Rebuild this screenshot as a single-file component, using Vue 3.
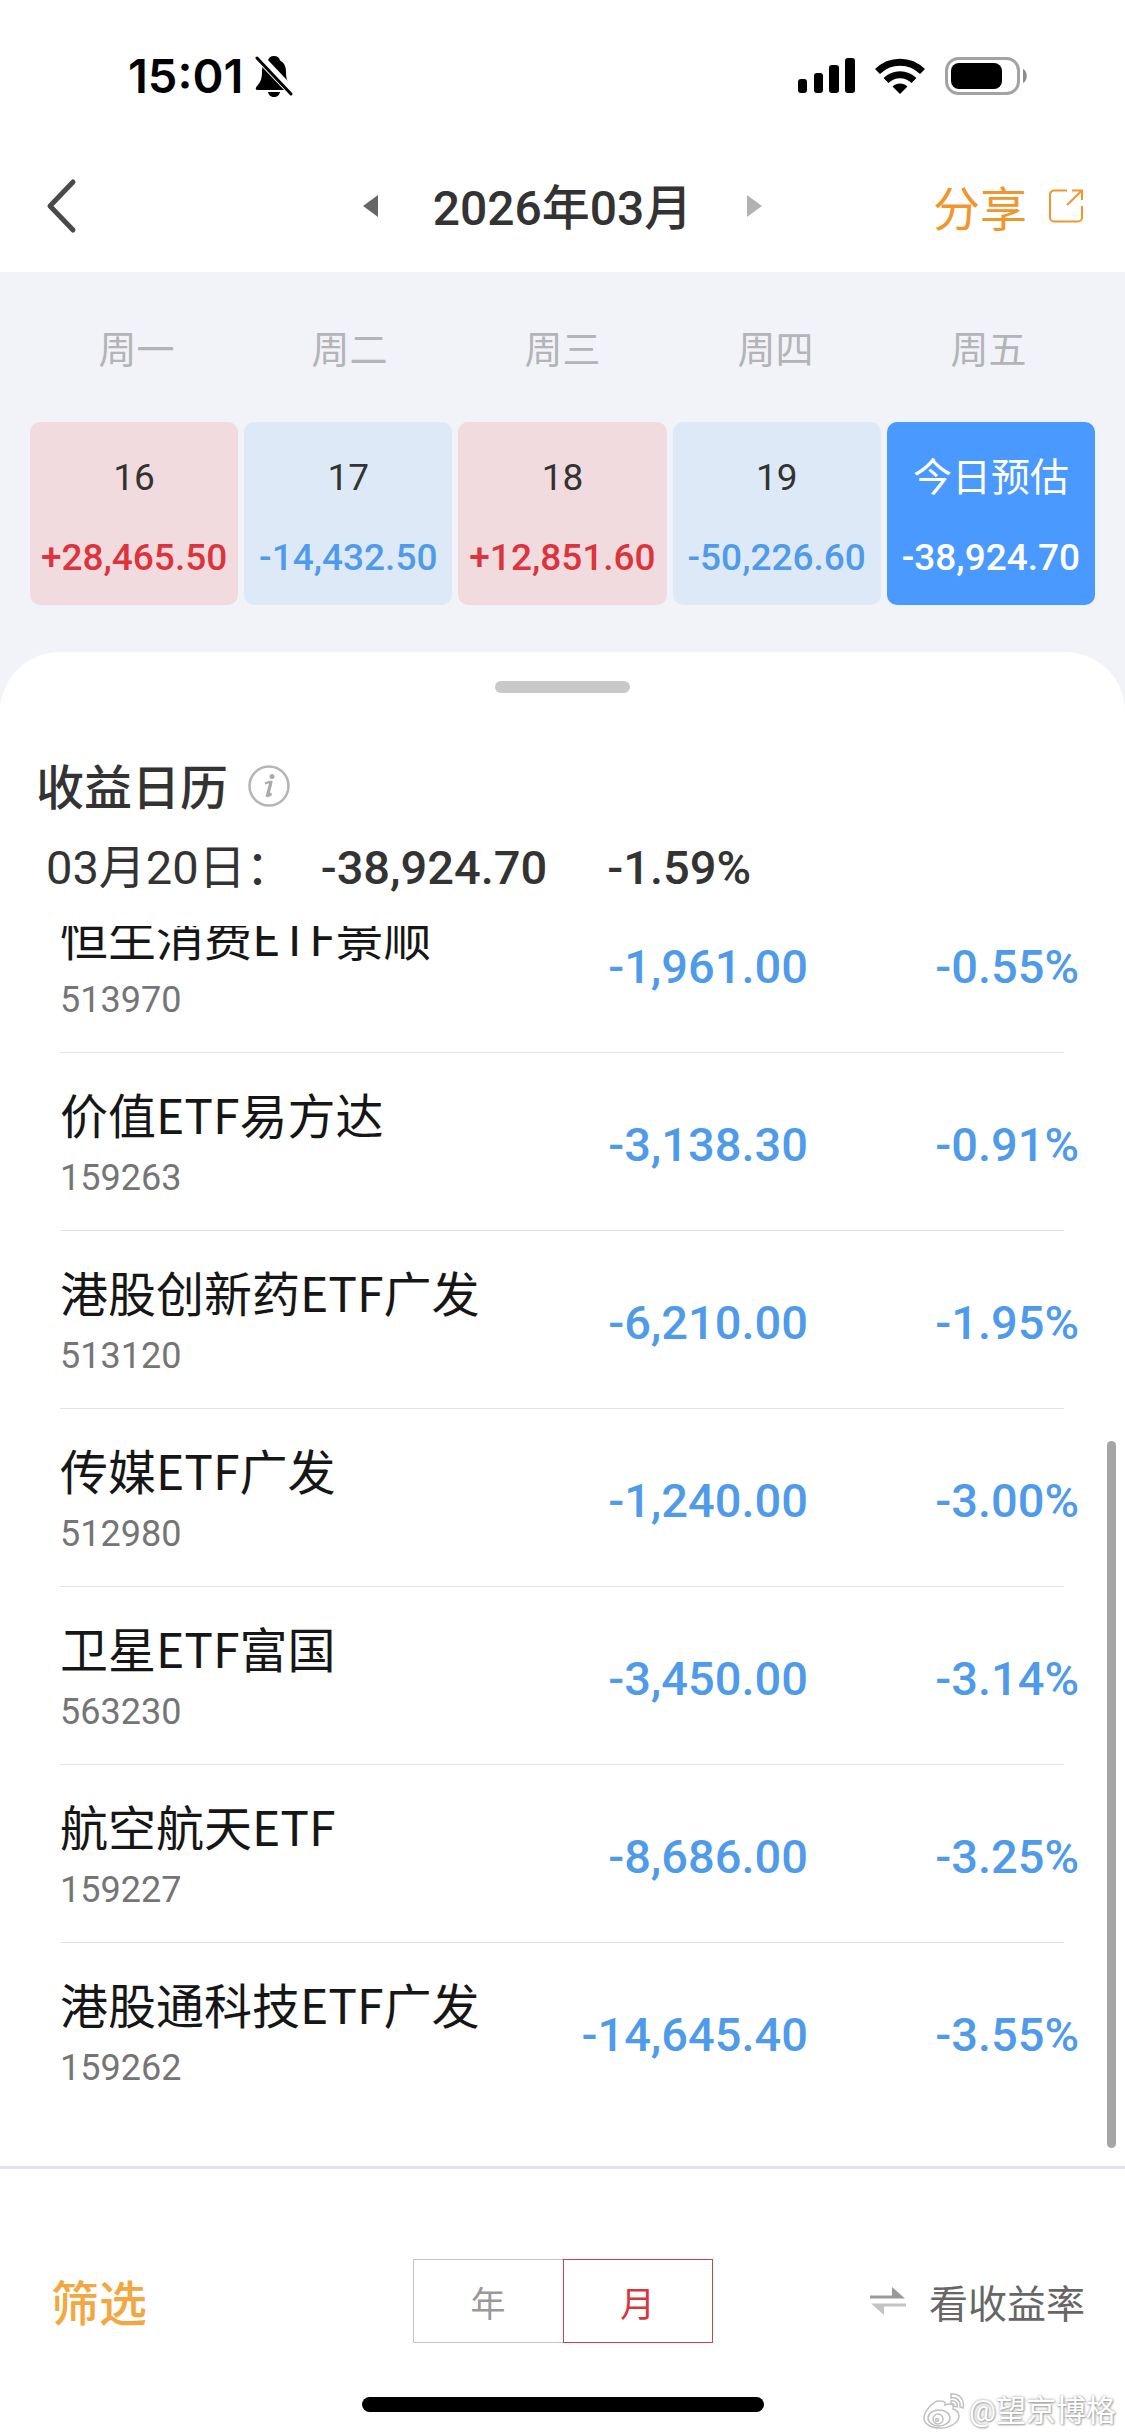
<script setup>
import { ref } from 'vue'

const weekdays = ['周一', '周二', '周三', '周四', '周五']
const days = [
  { label: '16', value: '+28,465.50', tone: 'gain' },
  { label: '17', value: '-14,432.50', tone: 'loss' },
  { label: '18', value: '+12,851.60', tone: 'gain' },
  { label: '19', value: '-50,226.60', tone: 'loss' },
  { label: '今日预估', value: '-38,924.70', tone: 'today' },
]
const holdings = [
  { name: '恒生消费ETF景顺', code: '513970', amount: '-1,961.00', rate: '-0.55%' },
  { name: '价值ETF易方达', code: '159263', amount: '-3,138.30', rate: '-0.91%' },
  { name: '港股创新药ETF广发', code: '513120', amount: '-6,210.00', rate: '-1.95%' },
  { name: '传媒ETF广发', code: '512980', amount: '-1,240.00', rate: '-3.00%' },
  { name: '卫星ETF富国', code: '563230', amount: '-3,450.00', rate: '-3.14%' },
  { name: '航空航天ETF', code: '159227', amount: '-8,686.00', rate: '-3.25%' },
  { name: '港股通科技ETF广发', code: '159262', amount: '-14,645.40', rate: '-3.55%' },
]
const periods = ['年', '月']
const period = ref('月')
</script>

<template>
  <div class="app">
    <header class="top">
      <div class="status">
        <div class="clock">
          <span>15:01</span>
          <svg width="38" height="42" viewBox="0 0 38 42" aria-hidden="true">
            <path d="M19 1c-3.400 0-5.600 2-6 4.600C8.500 8 7 12 7 17c0 8-2 10.500-5.300 14.500C0 34 .8 35 3 35h32c2.200 0 3-1 1.300-3.500C33 27.500 31 25 31 17c0-5-1.500-9-6-11.400C24.600 3 22.400 1 19 1z" />
            <path d="M13 37h12c-.5 3-3 5-6 5s-5.500-2-6-5z" />
            <path d="M3 1L38 38" stroke="#fff" stroke-width="9" />
            <path d="M2 3L36 39" stroke="#000" stroke-width="3" stroke-linecap="round" />
          </svg>
        </div>
        <div class="signals">
          <svg width="57" height="36" viewBox="0 0 57 36" aria-hidden="true">
            <rect x="0" y="21" width="9" height="14" rx="3" />
            <rect x="16" y="15" width="9" height="20" rx="3" />
            <rect x="31" y="7" width="10" height="28" rx="3" />
            <rect x="47" y="0" width="10" height="35" rx="3" />
          </svg>
          <svg width="50" height="37" viewBox="0 0 50 37" aria-hidden="true">
            <g fill="none" stroke="#000" stroke-width="7">
              <path d="M2.500 13.500C15 1 35 1 47.500 13.500" />
              <path d="M11 22.500C19 14.800 31 14.800 39 22.500" />
            </g>
            <path d="M25 36l-7.500-7.500C21.500 24.500 28.500 24.500 32.500 28.500z" />
          </svg>
          <svg width="83" height="38" viewBox="0 0 83 38" aria-hidden="true">
            <rect x="1.500" y="1.500" width="72" height="35" rx="12" fill="none" stroke="#a3a3a3" stroke-width="3" />
            <rect x="6" y="6" width="51" height="26" rx="8" />
            <path d="M78 12c5 2 5 12 0 14z" fill="#8c8c8c" />
          </svg>
        </div>
      </div>

      <nav class="nav">
        <button class="back" aria-label="返回">
          <svg width="32" height="56" viewBox="0 0 32 56"><path d="M28 4L5 28l23 24" fill="none" stroke="#4a4a4a" stroke-width="5" stroke-linecap="round" stroke-linejoin="round" /></svg>
        </button>
        <div class="month">
          <button aria-label="上个月">
            <svg width="15" height="22" viewBox="0 0 15 22"><path d="M15 0v22L0 11z" fill="#666" /></svg>
          </button>
          <h1>2026年03月</h1>
          <button aria-label="下个月">
            <svg width="15" height="22" viewBox="0 0 15 22"><path d="M0 0v22l15-11z" fill="#b2b2b2" /></svg>
          </button>
        </div>
        <button class="share">
          <span>分享</span>
          <svg width="34" height="34" viewBox="0 0 34 34" fill="none" stroke="#f0962e" stroke-width="2" aria-hidden="true">
            <path d="M18 1.500H5A4 4 0 0 0 1 5.500V28.500A4 4 0 0 0 5 32.500H29A4 4 0 0 0 33 28.500V17" />
            <path d="M23 1.500H33V11M32.500 2L18 16" />
          </svg>
        </button>
      </nav>
    </header>

    <section class="calendar">
      <div class="weekdays">
        <span v-for="w in weekdays" :key="w">{{ w }}</span>
      </div>
      <div class="days">
        <button v-for="d in days" :key="d.label" class="day" :class="d.tone">
          <span>{{ d.label }}</span>
          <strong>{{ d.value }}</strong>
        </button>
      </div>
    </section>

    <main class="sheet">
      <div class="handle"></div>
      <div class="heading">
        <h2>收益日历</h2>
        <button aria-label="说明">
          <svg width="42" height="42" viewBox="0 0 42 42">
            <circle cx="21" cy="21" r="19.500" fill="none" stroke="#b5b5b5" stroke-width="2.500" />
            <circle cx="24" cy="11.500" r="2.500" fill="#aaa" />
            <path d="M17 18.500C19 17.500 21 17 23 17L20 29.500C20 31 21.500 30.500 23.500 28.500" fill="none" stroke="#aaa" stroke-width="2.500" />
            <path d="M23 17L19 32" stroke="#aaa" stroke-width="3" />
          </svg>
        </button>
      </div>
      <div class="summary">
        <span class="date">03月20日：</span>
        <strong class="total">-38,924.70</strong>
        <strong>-1.59%</strong>
      </div>

      <div class="list">
        <div class="scroller">
          <table>
            <tbody>
              <tr v-for="h in holdings" :key="h.code">
                <th scope="row">
                  <span class="name">{{ h.name }}</span>
                  <span class="code">{{ h.code }}</span>
                </th>
                <td class="amount">{{ h.amount }}</td>
                <td class="rate"><span>{{ h.rate }}</span></td>
              </tr>
            </tbody>
          </table>
        </div>
        <div class="thumb"></div>
      </div>
    </main>

    <footer class="bottom">
      <div class="tools">
        <button class="filter">筛选</button>
        <div class="periods">
          <button v-for="p in periods" :key="p" :class="{ active: p === period }" @click="period = p">{{ p }}</button>
        </div>
        <button class="toggle">
          <svg width="36" height="28" viewBox="0 0 36 28" aria-hidden="true">
            <path d="M0 8.500H22V0L35 11.500H0z" fill="#999" />
            <path d="M36 16.500H1L14 28V19.500H36z" fill="#c4c4c4" />
          </svg>
          <span>看收益率</span>
        </button>
      </div>
      <div class="home"></div>
      <div class="watermark">
        <svg width="42" height="36" viewBox="0 0 42 36" fill="#fff" stroke="#c0c0c0" stroke-width="1.500" aria-hidden="true">
          <path d="M17 8C11 7 1 18 1 25c0 6 7 10 16 10 11 0 19-6 19-12 0-4-3-6-6-7 1-3 0-7-8-4 1-3-1-4-5-4z" />
          <ellipse cx="16" cy="25" rx="11" ry="8" />
          <circle cx="15" cy="26" r="5" />
          <circle cx="14" cy="27" r="1.500" />
          <path d="M28 1c8-1 14 5 12 14l-3-1c1-6-3-10-9-9zM28 8c4-1 7 2 6 6l-3-1c0-2-1-3-3-2z" />
        </svg>
        <span>@望京博格</span>
      </div>
    </footer>
  </div>
</template>

<style>
body {
  margin: 0;
}
</style>

<style scoped>
.app {
  display: flex;
  flex-direction: column;
  height: 100vh;
  background: #f2f3f8;
  color: #333;
  font-family: Roboto, "Noto Sans CJK SC", sans-serif;
}
button {
  margin: 0;
  padding: 0;
  border: 0;
  background: none;
  color: inherit;
  font: inherit;
  display: flex;
  align-items: center;
  justify-content: center;
}
svg {
  display: block;
  flex: none;
}
h1,
h2 {
  margin: 0;
  padding-top: 6px;
  font-size: 48px;
  line-height: 60px;
  font-weight: 500;
}
strong {
  font-weight: 500;
}

.top {
  background: #fff;
}
.status {
  display: flex;
  justify-content: space-between;
  align-items: center;
  height: 72px;
  padding: 40px 97px 28px 128px;
}
.clock {
  display: flex;
  align-items: center;
  gap: 12px;
  color: #000;
  font: 600 47px/60px Inter, sans-serif;
}
.signals {
  display: flex;
  align-items: center;
  gap: 20px;
}
.nav {
  display: grid;
  grid-template-columns: 1fr auto 1fr;
  align-items: center;
  height: 132px;
  padding: 0 42px;
}
.back {
  justify-self: start;
  padding-left: 3px;
}
.month {
  display: flex;
  align-items: center;
  gap: 55px;
}
.share {
  justify-self: end;
  gap: 22px;
  color: #f0962e;
  font-size: 47px;
  line-height: 60px;
}
.share span,
.toggle span {
  padding-top: 8px;
}

.calendar {
  padding: 53px 30px 47px;
}
.weekdays {
  display: grid;
  grid-template-columns: repeat(5, 1fr);
  margin-bottom: 47px;
  color: #b3b4b8;
  font-size: 38px;
  line-height: 50px;
  text-align: center;
}
.days {
  display: grid;
  grid-template-columns: repeat(5, 1fr);
  gap: 6px;
}
.day {
  flex-direction: column;
  gap: 36px;
  padding: 34px 0 25px;
  border-radius: 10px;
  font-size: 37px;
  line-height: 44px;
}
.day.gain {
  background: #f2dbdf;
}
.day.gain strong {
  color: #dc343c;
}
.day.loss {
  background: #dee9f8;
}
.day.loss strong {
  color: #4f9bea;
}
.day.today {
  background: #4a99ff;
  color: #fff;
}
.day.today span {
  font-size: 39px;
}

.sheet {
  display: flex;
  flex-direction: column;
  flex: 1;
  min-height: 0;
  border-radius: 60px 60px 0 0;
  background: #fff;
}
.handle {
  width: 135px;
  height: 12px;
  margin: 29px auto 60px;
  border-radius: 6px;
  background: #c9c9c9;
}
.heading {
  display: flex;
  align-items: center;
  gap: 20px;
  padding-left: 36px;
}
.summary {
  display: flex;
  margin: 19px 0 28px;
  padding-left: 46px;
  font-size: 47px;
  line-height: 60px;
}
.total {
  margin: 0 60px 0 28px;
}
.list {
  position: relative;
  flex: 1;
  min-height: 0;
}
.scroller {
  display: flex;
  flex-direction: column-reverse;
  box-sizing: border-box;
  height: 100%;
  padding: 0 61px 45px 60px;
  overflow-y: auto;
  scrollbar-width: none;
}
.thumb {
  position: absolute;
  right: 9px;
  bottom: 18px;
  width: 9px;
  height: 57%;
  border-radius: 5px;
  background: #a5a5a5;
}
table {
  flex: none;
  width: 100%;
  border-collapse: separate;
  border-spacing: 0;
}
th,
td {
  padding: 0;
  border-bottom: 1px solid #e2e2e4;
}
tr:last-child > * {
  border-bottom-color: transparent;
}
th {
  padding: 30px 0;
  text-align: left;
  font-weight: 400;
}
.name,
.code {
  display: block;
}
.name {
  margin-bottom: 13px;
  color: #161616;
  font: 400 48px/60px "Noto Sans CJK SC", sans-serif;
}
.code {
  color: #757575;
  font-size: 36px;
  line-height: 44px;
}
td {
  padding-top: 6px;
  color: #4f9bea;
  font-size: 47px;
  line-height: 60px;
  font-weight: 500;
  text-align: right;
  white-space: nowrap;
}
.rate {
  width: 256px;
}
.rate span {
  margin-right: -15px;
}

.bottom {
  position: relative;
  padding: 90px 0 24px;
  border-top: 3px solid #e3e3ea;
  background: #fff;
}
.tools {
  display: grid;
  grid-template-columns: 1fr auto 1fr;
  align-items: center;
  padding: 0 40px;
}
.filter {
  justify-self: start;
  padding: 8px 0 0 11px;
  color: #f2a740;
  font-size: 48px;
  line-height: 60px;
  font-weight: 500;
}
.periods {
  display: flex;
}
.periods button {
  box-sizing: border-box;
  width: 150px;
  height: 84px;
  border: 1px solid #c4c4c4;
  color: #999;
  font-size: 35px;
}
.periods button:first-child {
  border-right: 0;
}
.periods .active {
  border-color: #c9444f;
  color: #dc343c;
}
.toggle {
  justify-self: end;
  gap: 23px;
  color: #666;
  font-size: 39px;
  line-height: 60px;
}
.home {
  width: 402px;
  height: 15px;
  margin: 54px auto 0;
  border-radius: 8px;
  background: #000;
}
.watermark {
  position: absolute;
  right: 9px;
  bottom: 5px;
  display: flex;
  align-items: center;
  gap: 4px;
  color: #fff;
  font-size: 30px;
  line-height: 40px;
  text-shadow: 0 0 3px #999, 1px 1px 2px #aaa;
}
</style>
